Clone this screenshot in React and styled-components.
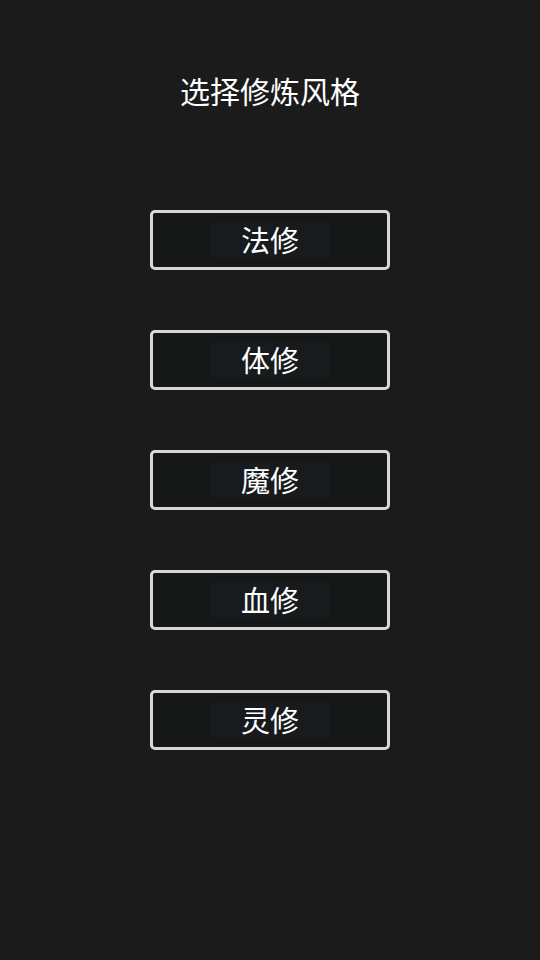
import React from "react";
import styled, { createGlobalStyle } from "styled-components";

const Global = createGlobalStyle`
  html, body { margin: 0; padding: 0; background: #1b1b1b; }
  body { font-family: "Noto Sans CJK SC", "Noto Sans", sans-serif; }
`;

const Page = styled.div`
  width: 540px;
  height: 960px;
  background: #1b1b1b;
  display: flex;
  flex-direction: column;
  align-items: center;
  box-sizing: border-box;
  padding-top: 69px;
`;

const Title = styled.h1`
  margin: 0;
  font-size: 30px;
  font-weight: 400;
  line-height: 42px;
  color: #ffffff;
`;

const List = styled.div`
  margin-top: 99px;
  display: flex;
  flex-direction: column;
  gap: 60px;
`;

const Button = styled.button`
  width: 240px;
  height: 60px;
  box-sizing: border-box;
  border: 3px solid #d8d8d8;
  border-radius: 5px;
  background: #151817;
  display: flex;
  align-items: center;
  justify-content: center;
  padding: 0;
  cursor: pointer;
`;

const Label = styled.span`
  width: 120px;
  height: 36px;
  background: #171b1e;
  color: #ffffff;
  font-family: "Noto Sans CJK SC", "Noto Sans", sans-serif;
  font-size: 29px;
  line-height: 34px;
  text-align: center;
`;

const styles = ["法修", "体修", "魔修", "血修", "灵修"];

export default function App() {
  return (
    <>
      <Global />
      <Page>
        <Title>选择修炼风格</Title>
        <List>
          {styles.map((s) => (
            <Button key={s}>
              <Label>{s}</Label>
            </Button>
          ))}
        </List>
      </Page>
    </>
  );
}
